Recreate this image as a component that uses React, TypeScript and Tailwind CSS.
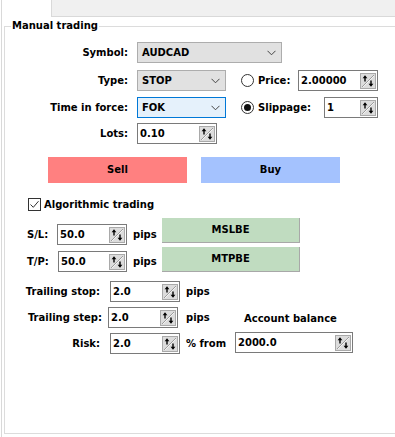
import React from "react";

const font = "font-['DejaVu_Sans',sans-serif] font-bold text-[10px] leading-[12px] text-black";

const Spin = () => (
  <svg width="16" height="16" viewBox="0 0 16 16" className="shrink-0">
    <rect x="0.5" y="0.5" width="15" height="15" fill="#dcdcdc" stroke="#a9a9a9" />
    <line x1="2" y1="14" x2="14" y2="2" stroke="#9c9c9c" strokeWidth="1" />
    <line x1="3" y1="14" x2="14" y2="3" stroke="#f4f4f4" strokeWidth="1" />
    <line x1="5" y1="4" x2="5" y2="8.5" stroke="#000" strokeWidth="1.4" />
    <polygon points="2.6,5.2 5,2.2 7.4,5.2" fill="#000" />
    <line x1="11" y1="7.5" x2="11" y2="12" stroke="#000" strokeWidth="1.4" />
    <polygon points="8.6,10.8 11,13.8 13.4,10.8" fill="#000" />
  </svg>
);

const Chevron = () => (
  <svg width="9" height="6" viewBox="0 0 9 6" className="shrink-0">
    <polyline points="0.5,0.8 4.5,4.8 8.5,0.8" fill="none" stroke="#444" strokeWidth="1" />
  </svg>
);

const NumInput = ({ value, w }: { value: string; w: string }) => (
  <div className={`${w} h-[21px] shrink-0 border border-[#7a7a7a] bg-white flex items-center justify-between pl-[2px] pr-[1px]`}>
    <span>{value}</span>
    <Spin />
  </div>
);

const Select = ({ value, w, focused }: { value: string; w: string; focused?: boolean }) => (
  <div
    className={`${w} h-[21px] shrink-0 border flex items-center justify-between pl-[4px] pr-[5px] ${
      focused ? "border-[#0078d7] bg-[#e5f1fb]" : "border-[#adadad] bg-[#e1e1e1]"
    }`}
  >
    <span>{value}</span>
    <Chevron />
  </div>
);

const Radio = ({ checked }: { checked?: boolean }) => (
  <div className="w-[13px] h-[13px] shrink-0 rounded-full border border-[#333] bg-white flex items-center justify-center">
    {checked && <div className="w-[7px] h-[7px] rounded-full bg-[#111]" />}
  </div>
);

export default function App() {
  return (
    <div className={`w-[395px] h-[437px] overflow-hidden bg-white pl-[1px] ${font}`}>
      <div className="h-full border-l border-[#d9d9d9]">
        {/* top tab strip */}
        <div className="ml-[49px] h-[17px] bg-[#f0f0f0] border-l border-b border-[#d9d9d9]" />

        {/* group box */}
        <div className="mt-[9px] ml-[2px] w-[392px] h-[408px] border border-[#dcdcdc]">
          <div className="-mt-[7px] ml-[6px] w-fit bg-white px-[1px]">Manual trading</div>

          {/* Symbol */}
          <div className="mt-[10px] flex items-center h-[21px]">
            <div className="w-[123px] text-right">Symbol:</div>
            <div className="ml-[9px]">
              <Select value="AUDCAD" w="w-[145px]" />
            </div>
          </div>

          {/* Type */}
          <div className="mt-[7px] flex items-center h-[21px]">
            <div className="w-[123px] text-right">Type:</div>
            <div className="ml-[9px]">
              <Select value="STOP" w="w-[89px]" />
            </div>
            <div className="ml-[15px]">
              <Radio />
            </div>
            <div className="ml-[4px] w-[40px]">Price:</div>
            <NumInput value="2.00000" w="w-[80px]" />
          </div>

          {/* Time in force */}
          <div className="mt-[6px] flex items-center h-[21px]">
            <div className="w-[123px] text-right">Time in force:</div>
            <div className="ml-[9px]">
              <Select value="FOK" w="w-[89px]" focused />
            </div>
            <div className="ml-[15px]">
              <Radio checked />
            </div>
            <div className="ml-[4px] w-[66px]">Slippage:</div>
            <NumInput value="1" w="w-[54px]" />
          </div>

          {/* Lots */}
          <div className="mt-[5px] flex items-center h-[21px]">
            <div className="w-[123px] text-right">Lots:</div>
            <div className="ml-[9px]">
              <NumInput value="0.10" w="w-[80px]" />
            </div>
          </div>

          {/* Sell / Buy */}
          <div className="mt-[13px] flex h-[26px] ml-[43px] gap-[14px]">
            <div className="w-[139px] h-full bg-[#ff8080] flex items-center justify-center">Sell</div>
            <div className="w-[139px] h-full bg-[#a4c2fe] flex items-center justify-center">Buy</div>
          </div>

          {/* Algorithmic trading */}
          <div className="mt-[15px] ml-[23px] flex items-center h-[13px]">
            <div className="w-[13px] h-[13px] border border-[#333] bg-white flex items-center justify-center">
              <svg width="11" height="11" viewBox="0 0 11 11">
                <polyline points="1.5,5.5 4.3,8.3 9.5,2.2" fill="none" stroke="#333" strokeWidth="1" />
              </svg>
            </div>
            <div className="ml-[3px]">Algorithmic trading</div>
          </div>

          {/* S/L */}
          <div className="mt-[7px] ml-[22px] flex items-start">
            <div className="mt-[6px] flex items-center h-[21px]">
              <div className="w-[30px]">S/L:</div>
              <NumInput value="50.0" w="w-[70px]" />
              <div className="ml-[6px] w-[29px]">pips</div>
            </div>
            <div className="w-[138px] h-[25px] bg-[#c0dcc0] border-r border-b border-[#a8a8a8] flex items-center justify-center">
              MSLBE
            </div>
          </div>

          {/* T/P */}
          <div className="mt-[2px] ml-[22px] flex items-start">
            <div className="mt-[4px] flex items-center h-[21px]">
              <div className="w-[31px]">T/P:</div>
              <NumInput value="50.0" w="w-[69px]" />
              <div className="ml-[6px] w-[29px]">pips</div>
            </div>
            <div className="w-[138px] h-[25px] bg-[#c0dcc0] border-r border-b border-[#a8a8a8] flex items-center justify-center">
              MTPBE
            </div>
          </div>

          {/* Trailing stop */}
          <div className="mt-[9px] flex items-center h-[21px]">
            <div className="w-[95px] text-right">Trailing stop:</div>
            <div className="ml-[10px]">
              <NumInput value="2.0" w="w-[70px]" />
            </div>
            <div className="ml-[6px]">pips</div>
          </div>

          {/* Trailing step */}
          <div className="mt-[5px] flex items-center h-[21px]">
            <div className="w-[97px] text-right">Trailing step:</div>
            <div className="ml-[6px]">
              <NumInput value="2.0" w="w-[70px]" />
            </div>
            <div className="ml-[8px] w-[58px]">pips</div>
            <div className="mt-[2px]">Account balance</div>
          </div>

          {/* Risk */}
          <div className="mt-[5px] flex items-center h-[21px]">
            <div className="w-[95px] text-right">Risk:</div>
            <div className="ml-[10px]">
              <NumInput value="2.0" w="w-[70px]" />
            </div>
            <div className="ml-[6px] w-[49px]">% from</div>
            <div className="-mt-[2px]">
              <NumInput value="2000.0" w="w-[118px]" />
            </div>
          </div>
        </div>
      </div>
    </div>
  );
}
